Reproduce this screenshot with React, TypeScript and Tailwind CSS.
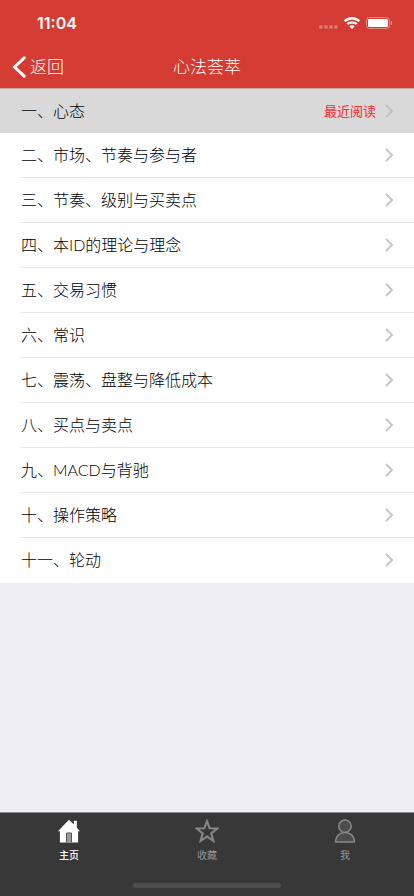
import type { ReactNode } from 'react';

const chapters = [
  { title: '一、心态', recent: true },
  { title: '二、市场、节奏与参与者' },
  { title: '三、节奏、级别与买卖点' },
  { title: '四、本ID的理论与理念' },
  { title: '五、交易习惯' },
  { title: '六、常识' },
  { title: '七、震荡、盘整与降低成本' },
  { title: '八、买点与卖点' },
  { title: '九、MACD与背驰' },
  { title: '十、操作策略' },
  { title: '十一、轮动' },
];

function StatusBar() {
  return (
    <div className="h-11 flex items-center justify-between pl-9 pr-[22px] pt-0.5">
      <span className="pl-px text-base leading-5 font-semibold">11:04</span>
      <div className="flex items-center gap-1.5">
        <svg className="w-5 h-4" viewBox="0 0 20 16" fill="#fff" fillOpacity="0.3" aria-hidden="true">
          <circle cx="3" cy="12" r="2" />
          <circle cx="8" cy="12" r="2" />
          <circle cx="13" cy="12" r="2" />
          <circle cx="18" cy="12" r="2" />
        </svg>
        <svg className="w-4 h-3" viewBox="0 0 16 12" fill="none" stroke="#fff" strokeWidth="2.3" aria-hidden="true">
          <path d="M0.7 4.2a10.5 10.5 0 0 1 14.6 0" />
          <path d="M3.3 7.200a6.8 6.8 0 0 1 9.400 0" />
          <path d="M8 12 5.500 9.500a3.500 3.500 0 0 1 5 0Z" fill="#fff" stroke="none" />
        </svg>
        <svg className="w-[26px] h-3" viewBox="0 0 26 12" aria-hidden="true">
          <rect x="0.5" y="0.5" width="23" height="11" rx="3" fill="none" stroke="#fff" strokeOpacity="0.4" />
          <rect x="2" y="2" width="20" height="8" rx="1.2" fill="#fff" />
          <path d="M24.8 4v4a2 2 0 0 0 0-4Z" fill="#fff" fillOpacity="0.5" />
        </svg>
      </div>
    </div>
  );
}

function Header() {
  return (
    <header className="bg-[#d43c33] text-white border-b border-[#c9a5a3]">
      <StatusBar />
      <div className="h-11 grid grid-cols-3 items-center pt-px">
        <button type="button" className="flex items-center gap-1 pl-3 text-[17px] leading-6 font-light">
          <svg className="w-3.5 h-6" viewBox="0 0 14 24" fill="none" stroke="#fff" strokeWidth="3" strokeLinecap="round" aria-hidden="true">
            <path d="M12.200 2.800 2.600 12l9.600 9.200" />
          </svg>
          返回
        </button>
        <h1 className="text-center text-[17px] leading-6 font-light">心法荟萃</h1>
      </div>
    </header>
  );
}

function ChapterRow({ title, recent, last }: { title: string; recent?: boolean; last: boolean }) {
  const border = recent ? 'h-11 border-[#d9d9d9]' : last ? 'h-[45px] border-white' : 'h-[45px] border-[#e8e8ea]';
  return (
    <li className={recent ? 'bg-[#d9d9d9]' : 'bg-white'}>
      <a href="#" className="block pl-5">
        <div className={`flex items-center border-b pr-5 ${border}`}>
          <span className="flex-1 pl-px text-base leading-6 font-light text-black font-['Lato','Noto_Sans_CJK_SC',sans-serif]">{title}</span>
          {recent && <span className="mr-2 text-[13px] leading-5 text-[#fb2c2c]">最近阅读</span>}
          <svg className="w-2.5 h-3.5" viewBox="0 0 10 14" fill="none" stroke={recent ? '#c2c2c5' : '#c5c5ca'} strokeWidth="2" aria-hidden="true">
            <path d="m2 1 6 6-6 6" />
          </svg>
        </div>
      </a>
    </li>
  );
}

function HomeIcon() {
  return (
    <svg className="w-6 h-6" viewBox="0 0 24 24" aria-hidden="true">
      <path d="M12 .8.900 12.200h2V23.500h18.200V12.200h2L19.800 8.700V1.800h-3v3.600Z" fill="#fff" />
      <path d="M9.500 23.500v-9.500h5v9.500" fill="#9a9a9a" stroke="#555" />
    </svg>
  );
}

function StarIcon() {
  return (
    <svg className="w-6 h-6" viewBox="0 0 24 24" aria-hidden="true">
      <path d="m12 3 2.400 6.500 7 .3-5.500 4.300 1.900 6.900-5.800-3.900L6.200 21l1.900-6.900-5.500-4.300 7-.3Z" transform="translate(-1.200 -1.200) scale(1.100)" fill="none" stroke="#858585" strokeWidth="1.900" />
    </svg>
  );
}

function UserIcon() {
  return (
    <svg className="w-6 h-6" viewBox="0 0 24 24" fill="#4c4c4c" stroke="#8a8a8a" strokeWidth="1.5" aria-hidden="true">
      <circle cx="12" cy="7.200" r="6.200" />
      <path d="M3.300 23.100c-.5 0-.8-.3-.8-.8.200-5.300 4.400-8.900 9.500-8.900s9.300 3.600 9.500 8.900c0 .5-.3.800-.8.800Z" />
    </svg>
  );
}

function Tab({ label, active, children }: { label: string; active?: boolean; children: ReactNode }) {
  return (
    <button
      type="button"
      className={`flex flex-col items-center gap-1 pt-1.5 text-[10px] leading-4 ${active ? 'text-white font-medium' : 'text-[#959595]'}`}
    >
      {children}
      {label}
    </button>
  );
}

export default function App() {
  return (
    <div className="min-h-screen flex flex-col bg-[#efeff4] font-['Inter','Noto_Sans_CJK_SC',sans-serif]">
      <Header />
      <ul>
        {chapters.map((chapter, index) => (
          <ChapterRow key={chapter.title} {...chapter} last={index === chapters.length - 1} />
        ))}
      </ul>
      <footer className="mt-auto bg-[#383838] border-t border-[#8f8f93]">
        <nav className="grid grid-cols-3">
          <Tab label="主页" active>
            <HomeIcon />
          </Tab>
          <Tab label="收藏">
            <StarIcon />
          </Tab>
          <Tab label="我">
            <UserIcon />
          </Tab>
        </nav>
        {/* Home indicator */}
        <div className="pt-5 pb-2">
          <div className="mx-auto w-[148px] h-[5px] rounded-full bg-[#4d4d4d]" />
        </div>
      </footer>
    </div>
  );
}
